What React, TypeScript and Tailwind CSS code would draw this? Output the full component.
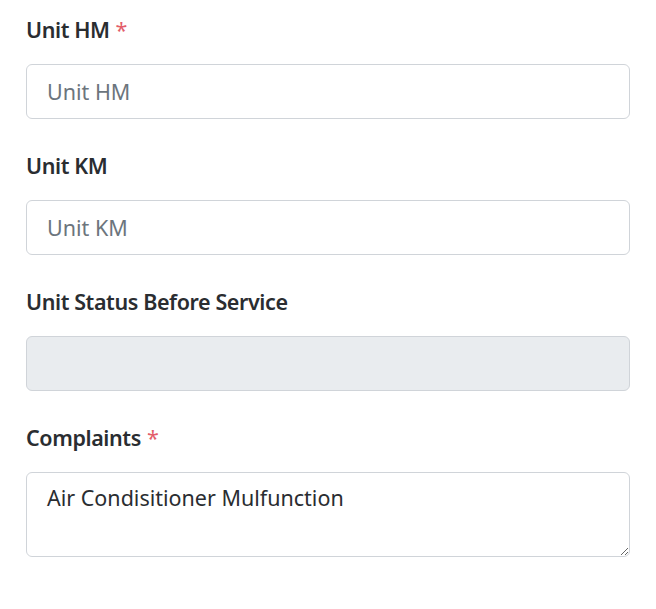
import React from "react";

const Label = ({ text, required }: { text: string; required?: boolean }) => (
  <label className="block h-[30px] leading-[30px] text-[21.5px] font-semibold text-[#2a2d31] tracking-[-0.4px] mb-[19px]">
    {text}
    {required && <span className="ml-[6px] font-normal text-[#e35d6a]">*</span>}
  </label>
);

const App = () => {
  const [hm, setHm] = React.useState("");
  const [km, setKm] = React.useState("");
  const [complaints, setComplaints] = React.useState("Air Condisitioner Mulfunction");

  const inputClass =
    "block w-full h-[55px] rounded-[6px] border border-[#d0d4d9] px-[20px] text-[21.5px] text-[#2a2d31] placeholder:text-[#6c757d] outline-none";

  return (
    <div
      className="min-h-screen bg-white pt-[15px] pl-[26px] pr-[26px]"
      style={{ fontFamily: '"Noto Sans", "Open Sans", sans-serif' }}
    >
      <div className="flex flex-col gap-[32px]">
        <div>
          <Label text="Unit HM" required />
          <input
            className={inputClass + " bg-white"}
            placeholder="Unit HM"
            value={hm}
            onChange={(e) => setHm(e.target.value)}
          />
        </div>
        <div>
          <Label text="Unit KM" />
          <input
            className={inputClass + " bg-white"}
            placeholder="Unit KM"
            value={km}
            onChange={(e) => setKm(e.target.value)}
          />
        </div>
        <div>
          <Label text="Unit Status Before Service" />
          <input className={inputClass + " bg-[#e9ecef]"} disabled />
        </div>
        <div>
          <Label text="Complaints" required />
          <textarea
            className="block w-full h-[85px] rounded-[6px] border border-[#d0d4d9] bg-white px-[20px] py-[10px] text-[21.5px] leading-[30px] text-[#2a2d31] outline-none"
            value={complaints}
            onChange={(e) => setComplaints(e.target.value)}
          />
        </div>
      </div>
    </div>
  );
};

export default App;
